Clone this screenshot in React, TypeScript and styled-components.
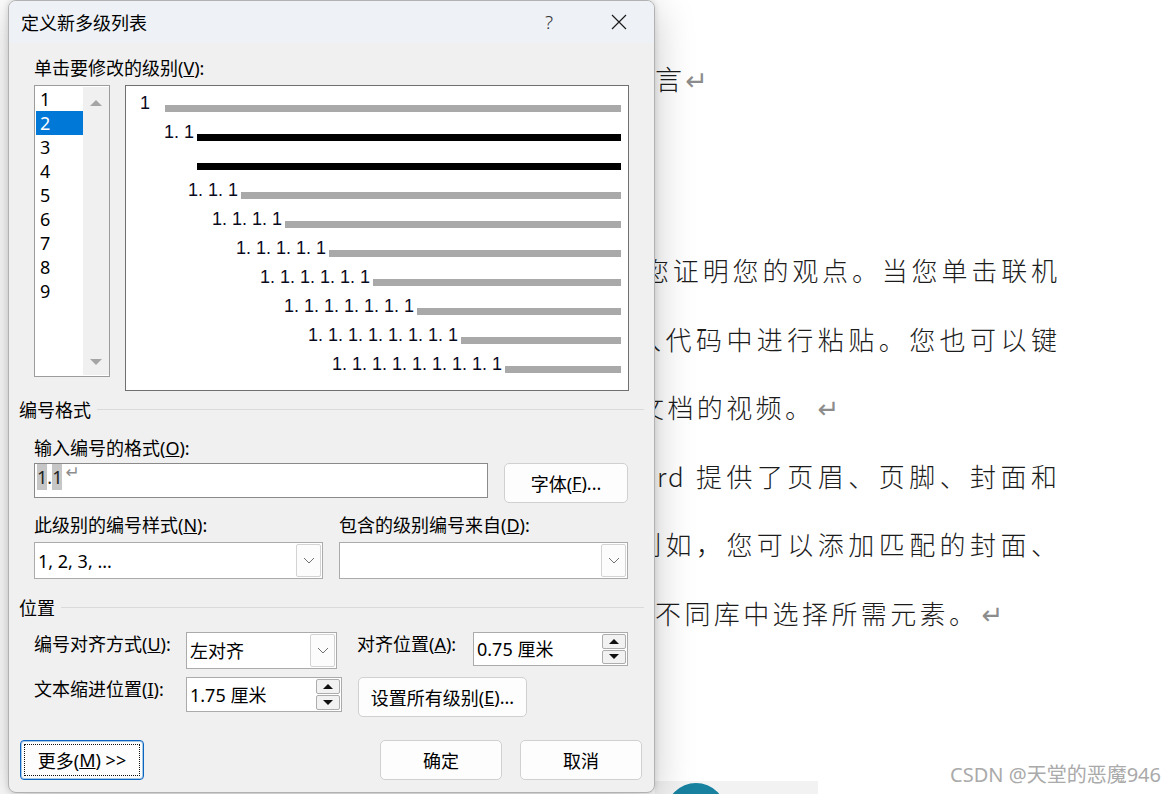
import React from "react";
import styled, { createGlobalStyle } from "styled-components";

const GlobalStyle = createGlobalStyle`
  html, body {
    margin: 0;
    padding: 0;
    background: #fff;
  }
  body {
    width: 1176px;
    height: 794px;
    overflow: hidden;
    font-family: "Noto Sans", "Noto Sans CJK SC", sans-serif;
  }
  * {
    box-sizing: border-box;
  }
`;

/* ---------- document behind the dialog ---------- */

const Desktop = styled.div`
  position: relative;
  width: 1176px;
  height: 794px;
  overflow: hidden;
  background: #fff;
`;

const Page = styled.div`
  padding-top: 45px;
  font-family: "Noto Sans CJK SC", sans-serif;
  font-weight: 300;
  color: #1c1c1c;
`;

const Heading = styled.div`
  height: 68px;
  margin-left: 628px;
  font-size: 27px;
  line-height: 68px;
  white-space: nowrap;
`;

const Paragraph = styled.div`
  margin-top: 123px;
`;

const DocLine = styled.div<{ $x: number; $fill?: boolean }>`
  height: 68.6px;
  margin-left: ${(p) => p.$x}px;
  font-size: 26px;
  line-height: 68.6px;
  letter-spacing: ${(p) => (p.$fill ? 2 : 3.4)}px;
  white-space: ${(p) => (p.$fill ? "normal" : "nowrap")};
  width: ${(p) => (p.$fill ? `${1057 - p.$x + 2}px` : "auto")};
  text-align: ${(p) => (p.$fill ? "justify" : "left")};
  text-align-last: ${(p) => (p.$fill ? "justify" : "auto")};
`;

const ReturnMark = styled.span<{ $size?: number }>`
  font-family: "DejaVu Sans", sans-serif;
  font-weight: 400;
  font-size: ${(p) => p.$size ?? 26}px;
  line-height: 1;
  color: #8c8c8c;
  letter-spacing: 0;
  margin-left: 3px;
`;

const BottomStrip = styled.div`
  position: absolute;
  left: 655px;
  bottom: 0;
  width: 163px;
  height: 13px;
  background: #f2f2f2;
  overflow: hidden;
`;

const Bubble = styled.div`
  margin: 2px 0 0 11px;
  width: 60px;
  height: 60px;
  border-radius: 50%;
  background: #17819f;
`;

const Watermark = styled.div`
  position: absolute;
  right: 15px;
  bottom: 6px;
  font-family: "Noto Sans", "Noto Sans CJK SC", sans-serif;
  font-size: 20px;
  color: #aaaaaa;
  white-space: nowrap;
`;

/* ---------- dialog window ---------- */

const Dialog = styled.div`
  position: absolute;
  left: 8px;
  top: 0;
  width: 647px;
  height: 793px;
  display: flex;
  flex-direction: column;
  background: #f0f0f0;
  border: 1px solid #b2b2b2;
  border-radius: 8px;
  overflow: hidden;
  box-shadow: 0 8px 40px rgba(0, 0, 0, 0.22), 0 0 6px rgba(0, 0, 0, 0.14);
  font-size: 18px;
  color: #000;
`;

const TitleBar = styled.div`
  height: 42px;
  flex: none;
  display: flex;
  align-items: center;
  padding: 0 20px 0 12px;
  background: #eef2f6;
`;

const Title = styled.div`
  flex: 1;
  font-family: "Noto Sans CJK SC", sans-serif;
  font-size: 18px;
  line-height: 24px;
`;

const TitleButton = styled.div<{ $gap?: number }>`
  width: 30px;
  height: 30px;
  margin-left: ${(p) => p.$gap ?? 0}px;
  display: flex;
  align-items: center;
  justify-content: center;
  color: #333;
  font-size: 19px;
  font-weight: 300;
`;

const Body = styled.div`
  flex: 1;
  display: flex;
  flex-direction: column;
  padding: 13px 10px 12px 10px;
`;

const Indent = styled.div`
  padding-left: 15px;
`;

const Label = styled.div<{ $top?: number }>`
  margin-top: ${(p) => p.$top ?? 0}px;
  line-height: 24px;
  white-space: nowrap;
`;

const GroupHeader = styled.div<{ $top: number }>`
  margin-top: ${(p) => p.$top}px;
  display: flex;
  align-items: center;
  gap: 6px;
  line-height: 24px;
  &::after {
    content: "";
    flex: 1;
    height: 1px;
    margin-top: -2px;
    background: #dadada;
  }
`;

const LevelRow = styled.div`
  margin-top: 5px;
  display: flex;
  align-items: flex-start;
  gap: 15px;
`;

const ListBox = styled.div`
  width: 76px;
  height: 292px;
  display: flex;
  padding: 1px 0 1px 1px;
  background: #fff;
  border: 1px solid #9c9c9c;
`;

const ListItems = styled.div`
  width: 47px;
`;

const ListItem = styled.div<{ $selected?: boolean }>`
  height: 24px;
  line-height: 24px;
  padding-left: 4px;
  font-size: 18px;
  background: ${(p) => (p.$selected ? "#0078d7" : "transparent")};
  color: ${(p) => (p.$selected ? "#fff" : "#000")};
`;

const ScrollBar = styled.div`
  width: 26px;
  display: flex;
  flex-direction: column;
  align-items: center;
  justify-content: space-between;
  padding: 13px 0 10px;
  background: #f0f0f0;
`;

const ScrollArrow = styled.div<{ $down?: boolean }>`
  width: 0;
  height: 0;
  border-left: 6px solid transparent;
  border-right: 6px solid transparent;
  ${(p) =>
    p.$down ? "border-top: 6px solid #a5a5a5;" : "border-bottom: 6px solid #a5a5a5;"}
`;

const Preview = styled.div`
  width: 504px;
  height: 306px;
  padding: 0 7px 0 0;
  background: #fff;
  border: 1px solid #707070;
`;

const PreviewRow = styled.div<{ $indent: number }>`
  height: 29px;
  display: flex;
  align-items: flex-end;
  padding: 0 0 3px ${(p) => p.$indent}px;
`;

const NumberLabel = styled.div<{ $w: number }>`
  width: ${(p) => p.$w}px;
  flex: none;
  font-family: "Liberation Sans", Arial, sans-serif;
  font-size: 18px;
  line-height: 18px;
  white-space: pre;
  color: #0a0a1e;
`;

const TextBar = styled.div<{ $dark?: boolean }>`
  flex: 1;
  height: 7px;
  background: ${(p) => (p.$dark ? "#000" : "#a9a9a9")};
`;

const InputRow = styled.div`
  margin-top: 3px;
  display: flex;
  align-items: flex-start;
  gap: 16px;
`;

const FormatInput = styled.div`
  width: 454px;
  height: 35px;
  display: flex;
  align-items: flex-start;
  padding-left: 2px;
  background: #fff;
  border: 1px solid #8a8a8a;
  font-size: 18px;
  line-height: 26px;
  color: #222;
`;

const Mark = styled.span`
  background: #c6c6c6;
`;

const PushButton = styled.div<{ $w: number; $span?: boolean }>`
  width: ${(p) => p.$w}px;
  height: 40px;
  display: flex;
  align-items: center;
  justify-content: center;
  background: #fdfdfd;
  border: 1px solid #d0d0d0;
  border-radius: 5px;
  white-space: nowrap;
  ${(p) => (p.$span ? "grid-column: span 2; margin-left: 1px;" : "")}
`;

const MoreButton = styled(PushButton)`
  border: 1px solid #0a64c0;
  box-shadow: inset 0 0 0 1px rgba(10, 100, 192, 0.35);
  border-radius: 4px;
  outline: 1px dotted #111;
  outline-offset: -5px;
`;

const TwoCols = styled.div<{ $top: number }>`
  margin-top: ${(p) => p.$top}px;
  display: grid;
  grid-template-columns: 289px 289px;
  column-gap: 16px;
`;

const Select = styled.div<{ $w?: number; $h?: number }>`
  width: ${(p) => (p.$w ? `${p.$w}px` : "auto")};
  height: ${(p) => p.$h ?? 37}px;
  display: flex;
  align-items: center;
  padding-left: 3px;
  background: #fff;
  border: 1px solid #ababab;
  white-space: nowrap;
`;

const SelectText = styled.div`
  flex: 1;
  line-height: 24px;
`;

const DropButton = styled.div`
  width: 25px;
  align-self: stretch;
  margin: 1px;
  display: flex;
  align-items: center;
  justify-content: center;
  background: #fcfcfc;
  border: 1px solid #d3d3d3;
  border-radius: 2px;
`;

const SpinButtons = styled.div`
  width: 24px;
  align-self: stretch;
  margin: 1px 1px 1px 0;
  display: flex;
  flex-direction: column;
  gap: 1px;
`;

const SpinHalf = styled.div`
  flex: 1;
  display: flex;
  align-items: center;
  justify-content: center;
  background: #f2f2f2;
  border: 1px solid #adadad;
  border-radius: 2px;
`;

const Tri = styled.div<{ $down?: boolean }>`
  width: 0;
  height: 0;
  border-left: 5px solid transparent;
  border-right: 5px solid transparent;
  ${(p) => (p.$down ? "border-top: 5px solid #111;" : "border-bottom: 5px solid #111;")}
`;

const PositionGrid = styled.div`
  margin-top: 12px;
  padding-left: 15px;
  display: grid;
  grid-template-columns: 152px 171px 116px 155px;
  grid-template-rows: 37px 40px;
  row-gap: 8px;
  align-items: start;
`;

const Footer = styled.div`
  margin-top: auto;
  display: flex;
  align-items: center;
  padding-left: 1px;
  padding-right: 2px;
`;

const FooterRight = styled.div`
  margin-left: auto;
  display: flex;
  gap: 18px;
`;

/* ---------- data ---------- */

const levels = ["1", "2", "3", "4", "5", "6", "7", "8", "9"];

const previewRows = [
  { x: 140, label: "1", line: 165, dark: false },
  { x: 164, label: "1. 1", line: 197, dark: true },
  { x: 164, label: "", line: 197, dark: true },
  ...[3, 4, 5, 6, 7, 8, 9].map((n) => ({
    x: 140 + 24 * (n - 1),
    label: Array(n).fill("1").join(". "),
    line: 241 + 44 * (n - 3),
    dark: false,
  })),
];

const docLines = [
  { x: 643, text: "您证明您的观点。当您单击联机", fill: true },
  { x: 635, text: "入代码中进行粘贴。您也可以键", fill: true },
  { x: 638, text: "文档的视频。", end: true },
  { x: 657, text: "rd 提供了页眉、页脚、封面和", fill: true },
  { x: 635, text: "例如，您可以添加匹配的封面、", fill: true },
  { x: 655, text: "不同库中选择所需元素。", end: true },
];

const PREVIEW_LEFT = 126;

const Chevron = () => (
  <svg width="12" height="7" viewBox="0 0 12 7">
    <polyline points="1,1 6,6 11,1" fill="none" stroke="#707070" strokeWidth="1" />
  </svg>
);

const CloseIcon = () => (
  <svg width="16" height="16" viewBox="0 0 16 16">
    <path d="M1 1 L15 15 M15 1 L1 15" stroke="#1b1b1b" strokeWidth="1.2" />
  </svg>
);

const Spin = ({ value, w, h }: { value: string; w: number; h: number }) => (
  <Select $w={w} $h={h}>
    <SelectText>{value}</SelectText>
    <SpinButtons>
      <SpinHalf>
        <Tri />
      </SpinHalf>
      <SpinHalf>
        <Tri $down />
      </SpinHalf>
    </SpinButtons>
  </Select>
);

const Dropdown = ({ value, w }: { value: string; w?: number }) => (
  <Select $w={w}>
    <SelectText>{value}</SelectText>
    <DropButton>
      <Chevron />
    </DropButton>
  </Select>
);

export default function App() {
  return (
    <>
      <GlobalStyle />
      <Desktop>
        <Page>
          <Heading>
            前言<ReturnMark $size={27}>↵</ReturnMark>
          </Heading>
          <Paragraph>
            {docLines.map((l, i) => (
              <DocLine key={i} $x={l.x} $fill={l.fill}>
                {l.text}
                {l.end && <ReturnMark>↵</ReturnMark>}
              </DocLine>
            ))}
          </Paragraph>
        </Page>

        <BottomStrip>
          <Bubble />
        </BottomStrip>
        <Watermark>CSDN @天堂的恶魔946</Watermark>

        <Dialog>
          <TitleBar>
            <Title>定义新多级列表</Title>
            <TitleButton>?</TitleButton>
            <TitleButton $gap={40}>
              <CloseIcon />
            </TitleButton>
          </TitleBar>

          <Body>
            <Indent>
              <Label>
                单击要修改的级别(<u>V</u>):
              </Label>
              <LevelRow>
                <ListBox>
                  <ListItems>
                    {levels.map((lv) => (
                      <ListItem key={lv} $selected={lv === "2"}>
                        {lv}
                      </ListItem>
                    ))}
                  </ListItems>
                  <ScrollBar>
                    <ScrollArrow />
                    <ScrollArrow $down />
                  </ScrollBar>
                </ListBox>
                <Preview>
                  {previewRows.map((r, i) => (
                    <PreviewRow key={i} $indent={r.x - PREVIEW_LEFT}>
                      <NumberLabel $w={r.line - r.x}>{r.label}</NumberLabel>
                      <TextBar $dark={r.dark} />
                    </PreviewRow>
                  ))}
                </Preview>
              </LevelRow>
            </Indent>

            <GroupHeader $top={7}>编号格式</GroupHeader>
            <Indent>
              <Label $top={14}>
                输入编号的格式(<u>O</u>):
              </Label>
              <InputRow>
                <FormatInput>
                  <Mark>1</Mark>.<Mark>1</Mark>
                  <ReturnMark $size={17}>↵</ReturnMark>
                </FormatInput>
                <PushButton $w={124}>
                  字体(<u>F</u>)...
                </PushButton>
              </InputRow>
              <TwoCols $top={10}>
                <Label>
                  此级别的编号样式(<u>N</u>):
                </Label>
                <Label>
                  包含的级别编号来自(<u>D</u>):
                </Label>
              </TwoCols>
              <TwoCols $top={5}>
                <Dropdown value="1, 2, 3, ..." />
                <Dropdown value="" />
              </TwoCols>
            </Indent>

            <GroupHeader $top={17}>位置</GroupHeader>
            <PositionGrid>
              <Label>
                编号对齐方式(<u>U</u>):
              </Label>
              <Dropdown value="左对齐" w={151} />
              <Label>
                对齐位置(<u>A</u>):
              </Label>
              <Spin value="0.75 厘米" w={155} h={34} />

              <Label>
                文本缩进位置(<u>I</u>):
              </Label>
              <Spin value="1.75 厘米" w={156} h={35} />
              <PushButton $w={169} $span>
                设置所有级别(<u>E</u>)...
              </PushButton>
            </PositionGrid>

            <Footer>
              <MoreButton $w={124}>
                更多(<u>M</u>) &gt;&gt;
              </MoreButton>
              <FooterRight>
                <PushButton $w={122}>确定</PushButton>
                <PushButton $w={122}>取消</PushButton>
              </FooterRight>
            </Footer>
          </Body>
        </Dialog>
      </Desktop>
    </>
  );
}
